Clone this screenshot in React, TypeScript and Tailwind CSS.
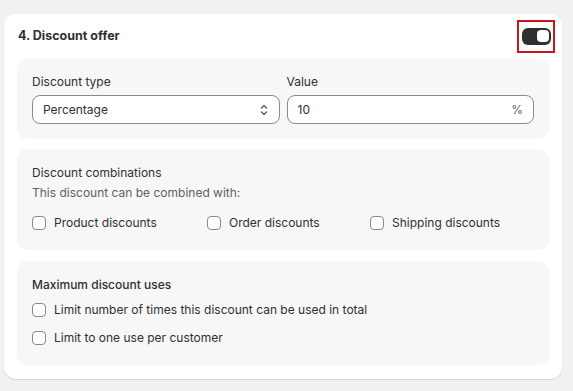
import React from "react";

const Checkbox: React.FC<{ label: string }> = ({ label }) => (
  <label className="flex items-center gap-[8px] h-[20px]">
    <span className="w-[14px] h-[14px] rounded-[4px] border border-[#8a8a8a] bg-white shrink-0" />
    <span>{label}</span>
  </label>
);

const Section: React.FC<{ className?: string; children: React.ReactNode }> = ({
  className = "",
  children,
}) => (
  <div className={`bg-[#f7f7f7] rounded-[10px] px-[15px] ${className}`}>{children}</div>
);

const App: React.FC = () => {
  return (
    <div
      className="w-[573px] h-[391px] bg-[#f1f1f1] pt-[14px] px-[4px] text-[12px] text-[#303030]"
      style={{ fontFamily: "Inter, 'Noto Sans', sans-serif" }}
    >
      <div className="w-[558px] bg-white rounded-[12px] shadow-[0_1px_1px_rgba(0,0,0,0.12)] pt-[9px] px-[13px] pb-[14px]">
        {/* Header */}
        <div className="flex items-center justify-between h-[26px] mb-[10px] pl-[1px]">
          <h2 className="font-[650] text-[12.5px] text-[#303030]">4. Discount offer</h2>
          <div className="border-[2.5px] border-[#c8161d] w-[38px] h-[33px] flex items-center justify-center mr-[-6px]">
            <div className="w-[29px] h-[17px] rounded-[6px] bg-[#303030] flex items-center justify-end pr-[2px]">
              <div className="w-[12px] h-[12px] rounded-[4px] bg-white" />
            </div>
          </div>
        </div>

        <div className="flex flex-col">
          {/* Discount type & value */}
          <Section className="pt-[15px] pb-[15px]">
            <div className="grid grid-cols-2 gap-[7px]">
              <div>
                <div className="h-[16px] leading-[16px] mb-[5px]">Discount type</div>
                <div className="h-[29px] rounded-[8px] border border-[#8a8a8a] bg-white flex items-center justify-between pl-[10px] pr-[10px]">
                  <span>Percentage</span>
                  <svg width="10" height="14" viewBox="0 0 10 14" fill="none" stroke="#5c5c5c" strokeWidth="1.3" strokeLinecap="round" strokeLinejoin="round">
                    <path d="M2.5 5 L5 2.5 L7.5 5" />
                    <path d="M2.5 9 L5 11.5 L7.5 9" />
                  </svg>
                </div>
              </div>
              <div>
                <div className="h-[16px] leading-[16px] mb-[5px]">Value</div>
                <div className="h-[29px] rounded-[8px] border border-[#8a8a8a] bg-white flex items-center justify-between pl-[10px] pr-[10px]">
                  <span>10</span>
                  <span className="text-[#616161]">%</span>
                </div>
              </div>
            </div>
          </Section>

          {/* Combinations */}
          <Section className="mt-[10px] pt-[14px] pb-[17px]">
            <div className="h-[20px] leading-[20px]">Discount combinations</div>
            <div className="h-[20px] leading-[20px] text-[#616161]">This discount can be combined with:</div>
            <div className="flex mt-[10px]">
              <div className="w-[175px]"><Checkbox label="Product discounts" /></div>
              <div className="w-[163px]"><Checkbox label="Order discounts" /></div>
              <div><Checkbox label="Shipping discounts" /></div>
            </div>
          </Section>

          {/* Max uses */}
          <Section className="mt-[11px] pt-[14px] pb-[17px]">
            <div className="h-[20px] leading-[20px] font-medium">Maximum discount uses</div>
            <div className="flex flex-col gap-[8px] mt-[5px]">
              <Checkbox label="Limit number of times this discount can be used in total" />
              <Checkbox label="Limit to one use per customer" />
            </div>
          </Section>
        </div>
      </div>
    </div>
  );
};

export default App;
